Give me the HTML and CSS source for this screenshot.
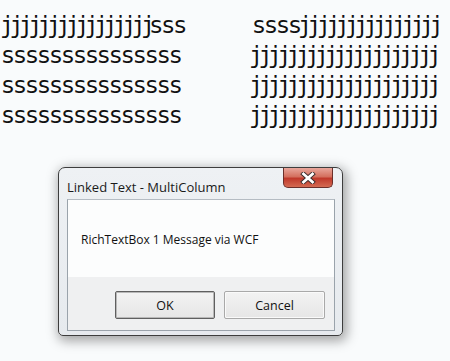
FILE: index.html
```html
<!DOCTYPE html>
<html>
<head>
<meta charset="utf-8">
<link rel="stylesheet" href="styles.css">
</head>
<body>
<div class="columns">
  <div class="col col-left">
    <div class="line"><span class="j lead-sm">jjjjjjjjjjjjjjjj</span>sss</div>
    <div class="line">sssssssssssssss</div>
    <div class="line">sssssssssssssss</div>
    <div class="line">sssssssssssssss</div>
  </div>
  <div class="col col-right">
    <div class="line">ssss<span class="j lead-mid">jjjjjjjjjjjjjjj</span></div>
    <div class="line"><span class="j lead">jjjjjjjjjjjjjjjjjjjj</span></div>
    <div class="line"><span class="j lead">jjjjjjjjjjjjjjjjjjjj</span></div>
    <div class="line"><span class="j lead">jjjjjjjjjjjjjjjjjjjj</span></div>
  </div>
</div>

<div class="dialog">
  <div class="titlebar">
    <span class="title">Linked Text - MultiColumn</span>
    <div class="close">
      <svg width="20" height="12" viewBox="0 0 20 12">
        <path d="M5.5 2 L14.5 10 M14.5 2 L5.5 10" stroke="#3a2a2a" stroke-width="4.6" stroke-linecap="square"/>
        <path d="M5.5 2 L14.5 10 M14.5 2 L5.5 10" stroke="#ffffff" stroke-width="2.8" stroke-linecap="square"/>
      </svg>
    </div>
  </div>
  <div class="client">
    <div class="message">RichTextBox 1 Message via WCF</div>
    <div class="buttons">
      <button class="btn btn-default">OK</button>
      <button class="btn">Cancel</button>
    </div>
  </div>
</div>
</body>
</html>
```
FILE: styles.css
```css
html, body {
  margin: 0;
  padding: 0;
}
body {
  width: 450px;
  height: 361px;
  background: #f9fbfc;
  overflow: hidden;
  font-family: "DejaVu Sans", sans-serif;
}
.columns {
  display: grid;
  grid-template-columns: 251px auto;
  padding: 10px 0 0 2px;
  color: #111;
  font-size: 23px;
  line-height: 30px;
}
.line {
  white-space: nowrap;
}
.j {
  font-family: "DejaVu Sans Mono", monospace;
  letter-spacing: -4.45px;
}
.lead {
  margin-left: -4px;
}
.lead-mid {
  margin-left: -3px;
}
.lead-sm {
  margin-left: -2px;
}
.dialog {
  margin: 37px 0 0 58px;
  width: 283px;
  height: 167px;
  border: 1px solid #3d3d3d;
  border-radius: 7px 7px 5px 5px;
  background: linear-gradient(#eef1f4, #e6eaee);
  box-shadow: 2px 3px 12px 2px rgba(0, 0, 0, 0.35);
  display: flex;
  flex-direction: column;
}
.titlebar {
  height: 31px;
  display: flex;
  align-items: flex-start;
  justify-content: space-between;
  padding-left: 8px;
}
.title {
  font-family: "Open Sans", sans-serif;
  font-size: 13px;
  color: #1a1a1a;
  margin-top: 10px;
}
.close {
  width: 48px;
  height: 19px;
  margin-right: 9px;
  border: 1px solid #6b2f2a;
  border-top: none;
  border-radius: 0 0 5px 5px;
  background: linear-gradient(#e9a79c 0%, #d4705f 45%, #c0392b 55%, #d46a52 100%);
  display: flex;
  align-items: center;
  justify-content: center;
}
.client {
  margin: 0 7px 0 8px;
  border: 1px solid #9aa3ab;
  border-top-color: #b5bcc3;
  display: flex;
  flex-direction: column;
  flex: 1;
  margin-bottom: 4px;
}
.message {
  background: #fcfdfd;
  height: 77px;
  padding: 31px 0 0 13px;
  box-sizing: border-box;
  font-family: "Open Sans", sans-serif;
  font-size: 12px;
  color: #111;
}
.buttons {
  flex: 1;
  background: #eff0f1;
  display: flex;
  justify-content: flex-end;
  gap: 9px;
  padding: 14px 9px 0 0;
}
.btn {
  width: 101px;
  height: 28px;
  border: 1px solid #a9a9a9;
  border-radius: 2px;
  background: linear-gradient(#f3f3f3, #e6e6e6);
  box-shadow: inset 0 0 0 1px #fafafa;
  font-family: "Open Sans", sans-serif;
  font-size: 12.5px;
  color: #111;
  padding: 0;
}
.btn-default {
  width: 100px;
  border: 1px solid #5f5f5f;
  box-shadow: inset 0 0 0 1px #b8b8b8;
}
```
